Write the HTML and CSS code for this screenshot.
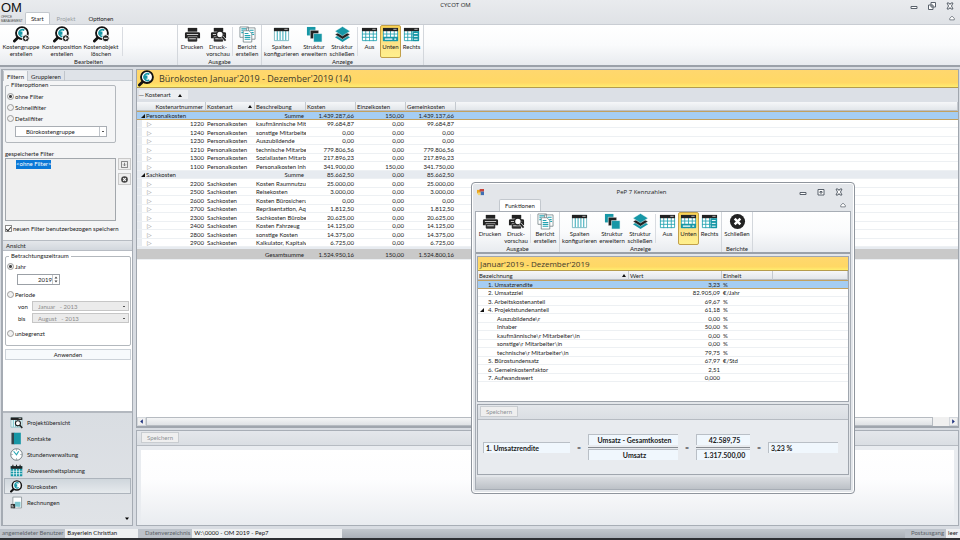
FILE: index.html
```html
<!DOCTYPE html>
<html lang="de">
<head>
    <meta charset="UTF-8">
    <meta name="viewport" content="width=device-width, initial-scale=1.0">
    <title>CYCOT OM</title>
    <link rel="stylesheet" href="styles.css">
</head>
<body>
    <!-- shared icons -->
    <svg class="sprite" aria-hidden="true">
        <symbol id="i-cost" viewBox="0 0 18 18">
            <path d="M5 12.500 1.500 16" stroke="#111" stroke-width="3" stroke-linecap="round"/>
            <circle cx="9.500" cy="7.500" r="6.300" fill="#fff" stroke="#111" stroke-width="2"/>
            <path d="M12 4.500a3.600 3.600 0 1 0 0 6M6 6.700h4M6 8.500h4" fill="none" stroke="#1797a6" stroke-width="1.700"/>
        </symbol>
        <symbol id="i-plus" viewBox="0 0 18 18">
            <use href="#i-cost"/>
            <circle cx="13.500" cy="13" r="3.700" fill="#222" stroke="#fff"/>
            <path d="M11.500 13h4M13.500 11v4" stroke="#fff" stroke-width="1.200"/>
        </symbol>
        <symbol id="i-minus" viewBox="0 0 18 18">
            <use href="#i-cost"/>
            <circle cx="13.500" cy="13" r="3.700" fill="#222" stroke="#fff"/>
            <path d="M11.500 13h4" stroke="#fff" stroke-width="1.200"/>
        </symbol>
        <symbol id="i-print" viewBox="0 0 18 18">
            <path d="M4 2h10v4H4z" fill="#222"/>
            <path d="M2.500 6.500h13a1.500 1.500 0 0 1 1.500 1.500v5h-3v-2H4v2H1V8a1.500 1.500 0 0 1 1.500-1.500z" fill="#222"/>
            <path d="M4.500 12h9v4h-9z" fill="#333" stroke="#222"/>
            <path d="M5.500 13.500h7M3 9h12" stroke="#fff" stroke-width=".8"/>
        </symbol>
        <symbol id="i-preview" viewBox="0 0 18 18">
            <use href="#i-print"/>
            <circle cx="10.500" cy="9" r="3.500" fill="#fff" stroke="#222" stroke-width="1.300"/>
            <path d="m13 11.500 3.500 4" stroke="#fff" stroke-width="3"/>
            <path d="m13 11.500 3.500 4" stroke="#222" stroke-width="1.800"/>
        </symbol>
        <symbol id="i-report" viewBox="0 0 18 18">
            <g fill="#fff" stroke="#6d7c80" stroke-width=".8">
                <path d="M1 1h9v11H1zM8 2h9v12H8z"/>
                <path d="M4.500 5h6l3 3v9h-9z"/>
            </g>
            <path d="M2.500 3h5M2.500 5h2M2.500 7h2M11 4.500h4.500M13 7h2.500M14 9h2M6 8h4M6 10h6M6 12h6M6 14h6" stroke="#25a3b1" stroke-width="1.200"/>
        </symbol>
        <symbol id="i-cols" viewBox="0 0 18 18">
            <path d="M1.500 2.500h15v13h-15z" fill="#fff" stroke="#5aa9b3" stroke-width=".8"/>
            <path d="M4.500 5v10M7.500 5v10M10.500 5v10M13.500 5v10" stroke="#25a3b1"/>
            <path d="M1 2h16v3.500H1z" fill="#222"/>
            <path d="M12 3.500h3.500" stroke="#fff" stroke-width=".7"/>
        </symbol>
        <symbol id="i-expand" viewBox="0 0 18 18">
            <path d="M1 1h9v9H1z" fill="#1797a6"/>
            <path d="M4.500 4.500h9v9h-9z" fill="#222" stroke="#fff" stroke-width=".6"/>
            <path d="M8 8h9v9H8z" fill="#1797a6" stroke="#fff" stroke-width=".6"/>
        </symbol>
        <symbol id="i-collapse" viewBox="0 0 18 18">
            <path d="m9 7.500 8 4.500-8 5-8-5z" fill="#1797a6"/>
            <path d="m9 4.500 8 4.500-8 5-8-5z" fill="#222" stroke="#fff" stroke-width=".5"/>
            <path d="m9 .5 8 5-8 5-8-5z" fill="#1797a6" stroke="#fff" stroke-width=".5"/>
        </symbol>
        <symbol id="i-grid" viewBox="0 0 18 18">
            <path d="M1 2h16v14H1z" fill="#fff"/>
            <path d="M1.500 5v10.500h15V5M1 8.500h16M1 12h16M5 5v11M9 5v11M13 5v11" fill="none" stroke="#25a3b1" stroke-width=".9"/>
            <path d="M1 2h16v3.500H1z" fill="#222"/>
            <path d="M12 3.500h3.500" stroke="#fff" stroke-width=".7"/>
        </symbol>
        <symbol id="i-bottom" viewBox="0 0 18 18">
            <use href="#i-grid"/>
            <path d="M1 11.500h16V16H1z" fill="#1797a6"/>
            <path d="M3 13.800h8M13 13.800h2" stroke="#fff" stroke-width="1.300"/>
        </symbol>
        <symbol id="i-right" viewBox="0 0 18 18">
            <use href="#i-grid"/>
            <path d="M10 5.500h7V16h-7z" fill="#1797a6"/>
            <path d="M11.500 8h4M11.500 11h4M11.500 14h4" stroke="#fff"/>
        </symbol>
        <symbol id="i-close" viewBox="0 0 18 18">
            <circle cx="9" cy="9" r="8" fill="#222"/>
            <path d="m6 6 6 6M12 6l-6 6" stroke="#fff" stroke-width="2.600"/>
        </symbol>
        <symbol id="i-project" viewBox="0 0 18 18">
            <use href="#i-cols"/>
            <circle cx="11" cy="10" r="3.500" fill="#fff" stroke="#222" stroke-width="1.500"/>
            <path d="m13.500 12.500 3.500 4" stroke="#222" stroke-width="2"/>
        </symbol>
        <symbol id="i-book" viewBox="0 0 18 18">
            <path d="M2 1h4v16H2z" fill="#35454c"/>
            <path d="M5.500 1H15v16H5.500z" fill="#1797a6"/>
        </symbol>
        <symbol id="i-clock" viewBox="0 0 18 18">
            <circle cx="9" cy="9" r="8" fill="#fff" stroke="#4b5a60"/>
            <path d="M9 2v1.500M9 14.500V16M2 9h1.500M14.500 9H16" stroke="#4b5a60"/>
            <path d="M5 4.500 9 9.500l3-5" fill="none" stroke="#25a3b1" stroke-width="1.500"/>
        </symbol>
        <symbol id="i-calendar" viewBox="0 0 18 18">
            <path d="M1 3h16v14H1z" fill="#1797a6"/>
            <path d="M1 3h16v3.500H1z" fill="#222"/>
            <path d="M4 1v4M9 1v4M14 1v4" stroke="#222" stroke-width="1.500"/>
            <path d="M1 10h16M1 13.500h16M5 7v10M9 7v10M13 7v10" stroke="#fff"/>
        </symbol>
        <symbol id="i-invoice" viewBox="0 0 18 18">
            <path d="M4 1.500h12v15H4z" fill="#fff" stroke="#7b878c"/>
            <path d="M6.500 8h8v7h-8z" fill="#7cc6cf"/>
            <path d="M1 11h6v6H1z" fill="#333"/>
            <path d="M2 13h2M2 15h3M8.500 15.500h2" stroke="#fff"/>
        </symbol>
    </svg>

    <div class="app">
        <header class="header">
            <div class="logo">
                <strong>OM</strong>
                <span>OFFICE</span>
                <span>MANAGEMENT</span>
            </div>
            <div class="header-main">
                <div class="titlebar">
                    <h1>CYCOT OM</h1>
                    <div class="win-buttons">
                        <button aria-label="Minimieren"><svg viewBox="0 0 8 8"><path d="M1 4.500h6v2H1z"/></svg></button>
                        <button aria-label="Wiederherstellen"><svg viewBox="0 0 8 8"><path d="M3 .5h4.500V5H3zM.5 3H5v4.500H.5z"/></svg></button>
                        <button aria-label="Schließen"><svg viewBox="0 0 8 8"><path d="M1 1h2l1 1.500L5 1h2L5.500 4 7 7H5L4 5.500 3 7H1l1.500-3z"/></svg></button>
                    </div>
                </div>
                <nav class="tabs">
                    <button class="tab active">Start</button>
                    <button class="tab" disabled>Projekt</button>
                    <button class="tab">Optionen</button>
                    <button class="fold" aria-label="Menüband minimieren"><svg viewBox="0 0 8 8"><path d="m1 4.500 3-3 3 3v2H1z"/></svg></button>
                </nav>
            </div>
        </header>

        <div class="ribbon">
            <section class="group group-edit">
                <div class="tools">
                    <button class="tool wide"><svg><use href="#i-plus"/></svg>Kostengruppe<br>erstellen</button>
                    <button class="tool wide"><svg><use href="#i-plus"/></svg>Kostenposition<br>erstellen</button>
                    <button class="tool wide"><svg><use href="#i-minus"/></svg>Kostenobjekt<br>löschen</button>
                    <i class="sep"></i>
                </div>
                <h2>Bearbeiten</h2>
            </section>
            <section class="group">
                <div class="tools">
                    <button class="tool"><svg><use href="#i-print"/></svg>Drucken</button>
                    <button class="tool"><svg><use href="#i-preview"/></svg>Druck-<br>vorschau</button>
                    <i class="sep"></i>
                    <button class="tool"><svg><use href="#i-report"/></svg>Bericht<br>erstellen</button>
                </div>
                <h2>Ausgabe</h2>
            </section>
            <section class="group">
                <div class="tools">
                    <button class="tool wide"><svg><use href="#i-cols"/></svg>Spalten<br>konfigurieren</button>
                    <button class="tool medium"><svg><use href="#i-expand"/></svg>Struktur<br>erweitern</button>
                    <button class="tool medium"><svg><use href="#i-collapse"/></svg>Struktur<br>schließen</button>
                    <i class="sep"></i>
                    <button class="tool narrow"><svg><use href="#i-grid"/></svg>Aus</button>
                    <button class="tool narrow active"><svg><use href="#i-bottom"/></svg>Unten</button>
                    <button class="tool narrow"><svg><use href="#i-right"/></svg>Rechts</button>
                </div>
                <h2>Anzeige</h2>
            </section>
        </div>

        <div class="workspace">
            <aside class="sidebar">
                <div class="side-tabs">
                    <button class="side-tab active">Filtern</button>
                    <button class="side-tab">Gruppieren</button>
                </div>
                <div class="filter-pane">
                    <fieldset class="filter-options">
                        <legend>Filteroptionen</legend>
                        <label><input type="radio" name="filter" checked>ohne Filter</label>
                        <label><input type="radio" name="filter">Schnellfilter</label>
                        <label><input type="radio" name="filter">Detailfilter</label>
                        <select class="select" aria-label="Detailfilter">
                            <option>Bürokostengruppe</option>
                        </select>
                    </fieldset>
                    <p class="saved-title">gespeicherte Filter</p>
                    <div class="saved">
                        <ul class="saved-list">
                            <li>&lt;ohne Filter&gt;</li>
                        </ul>
                        <div class="saved-actions">
                            <button aria-label="Filter speichern"><svg viewBox="0 0 8 8"><path d="M.5.500h7v7h-7zM4 2v3M2.500 4 4 5.500 5.500 4" fill="none" stroke="#555" stroke-width=".8"/></svg></button>
                            <button aria-label="Filter löschen"><svg viewBox="0 0 8 8"><circle cx="4" cy="4" r="3.800" fill="#444"/><path d="m2.500 2.500 3 3m0-3-3 3" stroke="#fff" stroke-width="1.200"/></svg></button>
                        </div>
                    </div>
                    <label class="check"><input type="checkbox" checked>neuen Filter benutzerbezogen speichern</label>
                </div>
                <h2 class="side-head">Ansicht</h2>
                <div class="view-pane">
                    <fieldset class="period">
                        <legend>Betrachtungszeitraum</legend>
                        <label><input type="radio" name="range" checked>Jahr</label>
                        <div class="spin">
                            <input type="text" value="2019" aria-label="Jahr">
                            <svg viewBox="0 0 6 8"><path d="m1.500 3 1.500-2 1.500 2zM1.500 5 3 7l1.500-2z" fill="#444"/></svg>
                        </div>
                        <label><input type="radio" name="range">Periode</label>
                        <div class="range-row">
                            <label for="from">von</label>
                            <select id="from" class="select" disabled><option>Januar &nbsp; - 2013</option></select>
                        </div>
                        <div class="range-row">
                            <label for="to">bis</label>
                            <select id="to" class="select" disabled><option>August &nbsp; - 2013</option></select>
                        </div>
                        <label class="unlimited"><input type="radio" name="range">unbegrenzt</label>
                    </fieldset>
                    <button class="apply">Anwenden</button>
                </div>
                <nav class="modules">
                    <a href="#"><svg><use href="#i-project"/></svg>Projektübersicht</a>
                    <a href="#"><svg><use href="#i-book"/></svg>Kontakte</a>
                    <a href="#"><svg><use href="#i-clock"/></svg>Stundenverwaltung</a>
                    <a href="#"><svg><use href="#i-calendar"/></svg>Abwesenheitsplanung</a>
                    <a href="#" class="active"><svg><use href="#i-cost"/></svg>Bürokosten</a>
                    <a href="#"><svg><use href="#i-invoice"/></svg>Rechnungen</a>
                    <button class="more" aria-label="Weitere"><svg viewBox="0 0 4 3"><path d="M0 .5h4L2 3z"/></svg></button>
                </nav>
            </aside>

            <main class="content">
                <section class="costs">
                    <h2 class="banner"><svg><use href="#i-cost"/></svg>Bürokosten Januar'2019 - Dezember'2019 (14)</h2>
                    <div class="group-bar"><button>─ Kostenart <b class="up"></b></button></div>
                    <table class="grid cost-grid">
                        <colgroup>
                            <col class="c-strip"><col class="c-arrow"><col class="c-num"><col class="c-kind"><col class="c-desc">
                            <col class="c-sum"><col class="c-sum"><col class="c-sum"><col>
                        </colgroup>
                        <thead>
                            <tr><th colspan="3" class="num">Kostenartnummer</th><th>Kostenart<b class="up"></b></th><th>Beschreibung</th><th>Kosten</th><th>Einzelkosten</th><th>Gemeinkosten</th><th></th></tr>
                        </thead>
                        <tbody>
                            <tr class="sum selected"><td colspan="4"><b class="open"></b>Personalkosten</td><td class="num">Summe</td><td class="num">1.439.287,66</td><td class="num">150,00</td><td class="num">1.439.137,66</td><td></td></tr>
                            <tr><td></td><td>▷</td><td class="num">1220</td><td>Personalkosten</td><td>kaufmännische Mita</td><td class="num">99.684,87</td><td class="num">0,00</td><td class="num">99.684,87</td><td></td></tr>
                            <tr><td></td><td>▷</td><td class="num">1240</td><td>Personalkosten</td><td>sonstige Mitarbeiter</td><td class="num">0,00</td><td class="num">0,00</td><td class="num">0,00</td><td></td></tr>
                            <tr><td></td><td>▷</td><td class="num">1230</td><td>Personalkosten</td><td>Auszubildende</td><td class="num">0,00</td><td class="num">0,00</td><td class="num">0,00</td><td></td></tr>
                            <tr><td></td><td>▷</td><td class="num">1210</td><td>Personalkosten</td><td>technische Mitarbei</td><td class="num">779.806,56</td><td class="num">0,00</td><td class="num">779.806,56</td><td></td></tr>
                            <tr><td></td><td>▷</td><td class="num">1300</td><td>Personalkosten</td><td>Soziallasten Mitarb</td><td class="num">217.896,23</td><td class="num">0,00</td><td class="num">217.896,23</td><td></td></tr>
                            <tr><td></td><td>▷</td><td class="num">1100</td><td>Personalkosten</td><td>Personalkosten Inh</td><td class="num">341.900,00</td><td class="num">150,00</td><td class="num">341.750,00</td><td></td></tr>
                            <tr class="sum"><td colspan="4"><b class="open"></b>Sachkosten</td><td class="num">Summe</td><td class="num">85.662,50</td><td class="num">0,00</td><td class="num">85.662,50</td><td></td></tr>
                            <tr><td></td><td>▷</td><td class="num">2200</td><td>Sachkosten</td><td>Kosten Raumnutzur</td><td class="num">25.000,00</td><td class="num">0,00</td><td class="num">25.000,00</td><td></td></tr>
                            <tr><td></td><td>▷</td><td class="num">2500</td><td>Sachkosten</td><td>Reisekosten</td><td class="num">3.000,00</td><td class="num">0,00</td><td class="num">3.000,00</td><td></td></tr>
                            <tr><td></td><td>▷</td><td class="num">2600</td><td>Sachkosten</td><td>Kosten Bürosicheru</td><td class="num">0,00</td><td class="num">0,00</td><td class="num">0,00</td><td></td></tr>
                            <tr><td></td><td>▷</td><td class="num">2700</td><td>Sachkosten</td><td>Repräsentation, Aq</td><td class="num">1.812,50</td><td class="num">0,00</td><td class="num">1.812,50</td><td></td></tr>
                            <tr><td></td><td>▷</td><td class="num">2300</td><td>Sachkosten</td><td>Sachkosten Bürobe</td><td class="num">20.625,00</td><td class="num">0,00</td><td class="num">20.625,00</td><td></td></tr>
                            <tr><td></td><td>▷</td><td class="num">2400</td><td>Sachkosten</td><td>Kosten Fahrzeug</td><td class="num">14.125,00</td><td class="num">0,00</td><td class="num">14.125,00</td><td></td></tr>
                            <tr><td></td><td>▷</td><td class="num">2800</td><td>Sachkosten</td><td>sonstige Kosten</td><td class="num">14.375,00</td><td class="num">0,00</td><td class="num">14.375,00</td><td></td></tr>
                            <tr><td></td><td>▷</td><td class="num">2900</td><td>Sachkosten</td><td>Kalkulator, Kapitalv</td><td class="num">6.725,00</td><td class="num">0,00</td><td class="num">6.725,00</td><td></td></tr>
                        </tbody>
                        <tfoot>
                            <tr><td colspan="5" class="num">Gesamtsumme</td><td class="num">1.524.950,16</td><td class="num">150,00</td><td class="num">1.524.800,16</td><td></td></tr>
                        </tfoot>
                    </table>
                    <div class="scrollbar">
                        <button aria-label="nach links"><svg viewBox="0 0 8 8"><path d="M5.500 1.500v5L2.500 4z"/></svg></button>
                        <div class="track"><div class="thumb"></div></div>
                        <button aria-label="nach rechts"><svg viewBox="0 0 8 8"><path d="M2.500 1.500v5l3-2.500z"/></svg></button>
                    </div>
                </section>
                <section class="detail">
                    <div class="save-bar"><button class="save" disabled>Speichern</button></div>
                    <div class="detail-body"></div>
                </section>
            </main>
        </div>

        <footer class="status">
            <span class="status-label user">angemeldeter Benutzer</span>
            <span class="status-value user-name">Bayerlein Christian</span>
            <span class="status-label dir">Datenverzeichnis</span>
            <span class="status-value path">W:\0000 - OM 2019 - Pep7</span>
            <span class="status-label outbox">Postausgang</span>
            <span class="status-value">leer</span>
        </footer>
    </div>

    <div class="dialog" role="dialog" aria-labelledby="dialog-title">
        <div class="titlebar">
            <svg class="app-icon" viewBox="0 0 8 8"><path d="M0 1h4v4H0z" fill="#e9a820"/><path d="M3 0h5v3H3z" fill="#c8463c"/><path d="M4 3h4v4H4z" fill="#3f6fb5"/><path d="M1 4h3v3H1z" fill="#f3d675"/></svg>
            <h1 id="dialog-title">PeP 7 Kennzahlen</h1>
            <div class="win-buttons">
                <button aria-label="Minimieren"><svg viewBox="0 0 8 8"><path d="M1 4.500h6v2H1z"/></svg></button>
                <button aria-label="Maximieren"><svg viewBox="0 0 8 8"><path d="M1 1.500h6v5.500H1zM3 3.500h2v1.500H3z"/></svg></button>
                <button aria-label="Schließen"><svg viewBox="0 0 8 8"><path d="M1 1h2l1 1.500L5 1h2L5.500 4 7 7H5L4 5.500 3 7H1l1.500-3z"/></svg></button>
            </div>
        </div>
        <nav class="tabs">
            <button class="tab active">Funktionen</button>
            <button class="fold" aria-label="Menüband minimieren"><svg viewBox="0 0 8 8"><path d="m1 4.500 3-3 3 3v2H1z"/></svg></button>
        </nav>
        <div class="dialog-frame">
            <div class="ribbon">
                <section class="group">
                    <div class="tools">
                        <button class="tool"><svg><use href="#i-print"/></svg>Drucken</button>
                        <button class="tool"><svg><use href="#i-preview"/></svg>Druck-<br>vorschau</button>
                        <i class="sep"></i>
                        <button class="tool"><svg><use href="#i-report"/></svg>Bericht<br>erstellen</button>
                    </div>
                    <h2>Ausgabe</h2>
                </section>
                <section class="group">
                    <div class="tools">
                        <button class="tool wide"><svg><use href="#i-cols"/></svg>Spalten<br>konfigurieren</button>
                        <button class="tool medium"><svg><use href="#i-expand"/></svg>Struktur<br>erweitern</button>
                        <button class="tool medium"><svg><use href="#i-collapse"/></svg>Struktur<br>schließen</button>
                        <i class="sep"></i>
                        <button class="tool narrow"><svg><use href="#i-grid"/></svg>Aus</button>
                        <button class="tool narrow active"><svg><use href="#i-bottom"/></svg>Unten</button>
                        <button class="tool narrow"><svg><use href="#i-right"/></svg>Rechts</button>
                    </div>
                    <h2>Anzeige</h2>
                </section>
                <section class="group">
                    <div class="tools">
                        <button class="tool medium"><svg><use href="#i-close"/></svg>Schließen</button>
                    </div>
                    <h2>Berichte</h2>
                </section>
            </div>
            <div class="kpi-panel">
                <h2 class="banner">Januar'2019 - Dezember'2019</h2>
                <table class="grid kpi-grid">
                    <colgroup><col class="k-name"><col class="k-value"><col class="k-unit"><col></colgroup>
                    <thead>
                        <tr><th>Bezeichnung<b class="up"></b></th><th>Wert</th><th>Einheit</th><th></th></tr>
                    </thead>
                    <tbody>
                        <tr class="selected"><td>1. Umsatzrendite</td><td class="num">3,23</td><td>%</td><td></td></tr>
                        <tr><td>2. Umsatzziel</td><td class="num">82.905,09</td><td>€/Jahr</td><td></td></tr>
                        <tr><td>3. Arbeitskostenanteil</td><td class="num">69,67</td><td>%</td><td></td></tr>
                        <tr><td class="parent"><b class="open"></b>4. Projektstundenanteil</td><td class="num">61,18</td><td>%</td><td></td></tr>
                        <tr><td class="child">Auszubildende\r</td><td class="num">0,00</td><td>%</td><td></td></tr>
                        <tr><td class="child">Inhaber</td><td class="num">50,00</td><td>%</td><td></td></tr>
                        <tr><td class="child">kaufmännische\r Mitarbeiter\in</td><td class="num">0,00</td><td>%</td><td></td></tr>
                        <tr><td class="child">sonstige\r Mitarbeiter\in</td><td class="num">0,00</td><td>%</td><td></td></tr>
                        <tr><td class="child">technische\r Mitarbeiter\in</td><td class="num">79,75</td><td>%</td><td></td></tr>
                        <tr><td>5. Bürostundensatz</td><td class="num">67,97</td><td>€/Std</td><td></td></tr>
                        <tr><td>6. Gemeinkostenfaktor</td><td class="num">2,51</td><td></td><td></td></tr>
                        <tr><td>7. Aufwandswert</td><td class="num">0,000</td><td></td><td></td></tr>
                    </tbody>
                </table>
            </div>
            <div class="formula-panel">
                <div class="save-bar"><button class="save" disabled>Speichern</button></div>
                <div class="formula">
                    <output class="term name">1. Umsatzrendite</output>
                    <span>=</span>
                    <div class="fraction text">
                        <output class="term">Umsatz - Gesamtkosten</output>
                        <output class="term">Umsatz</output>
                    </div>
                    <span>=</span>
                    <div class="fraction">
                        <output class="term">42.589,75</output>
                        <output class="term">1.317.500,00</output>
                    </div>
                    <span>=</span>
                    <output class="term result">3,23 %</output>
                </div>
            </div>
            <div class="dialog-status"></div>
        </div>
    </div>
</body>
</html>
```
FILE: styles.css
```css
* {
    box-sizing: border-box;
}

body {
    margin: 0;
    font-family: Lato, "Liberation Sans", sans-serif;
    font-size: 6px;
    line-height: 7px;
    color: #222;
    background: #dfe3e8;
    overflow: hidden;
}

h1, h2, p, ul {
    margin: 0;
    padding: 0;
    font-size: 6px;
    font-weight: normal;
    list-style: none;
}

button, input, select {
    font: inherit;
    color: inherit;
    margin: 0;
    padding: 0;
    border: 0;
    background: none;
}

.sprite {
    display: none;
}

.app {
    display: flex;
    flex-direction: column;
    height: 100vh;
    border-bottom: 2px solid #2d2f33;
}

/* header */
.header {
    display: flex;
    height: 24px;
    background: linear-gradient(#e9ebee, #dfe2e6);
}

.logo {
    width: 25px;
    padding-left: 1px;
    font-family: "Liberation Sans", sans-serif;
    font-size: 3px;
    line-height: 4px;
    color: #444;
}

.logo strong {
    display: block;
    font-size: 13px;
    font-weight: normal;
    line-height: 15px;
    color: #111;
}

.logo span {
    display: block;
}

.header-main {
    flex: 1;
    display: flex;
    flex-direction: column;
    justify-content: space-between;
}

.titlebar {
    display: flex;
    align-items: center;
    height: 11px;
    padding-right: 6px;
}

.titlebar h1 {
    flex: 1;
    text-align: center;
    font-family: "Open Sans", sans-serif;
}

.header .titlebar h1 {
    padding-right: 24px;
}

.win-buttons {
    display: flex;
    gap: 10px;
}

.win-buttons button, .fold {
    width: 8px;
    height: 8px;
}

.win-buttons svg, .fold svg {
    display: block;
    fill: #fff;
    stroke: #59616b;
    stroke-width: 1;
}

.tabs {
    display: flex;
    align-items: flex-end;
    padding-right: 3px;
}

.tab {
    height: 12px;
    padding: 0 5px;
    margin-right: 1px;
    border: 1px solid transparent;
    border-bottom: 0;
}

.tab:disabled {
    color: #9a9fa5;
}

.tab.active {
    background: #fff;
    border-color: #c3c8ce;
    border-radius: 2px 2px 0 0;
}

.fold {
    margin-left: auto;
    align-self: center;
}

.fold svg {
    width: 6px;
    height: 6px;
}

/* ribbon */
.ribbon {
    display: flex;
    height: 43px;
    background: linear-gradient(#fff, #fafbfc 50%, #e8ebef);
    border-top: 1px solid #c9cdd3;
    border-bottom: 2px solid #9ba1a9;
}

.group {
    display: flex;
    flex-direction: column;
    justify-content: space-between;
    border-right: 1px solid #d3d7dc;
}

.group-edit {
    width: 178px;
}

.group h2 {
    text-align: center;
    line-height: 7px;
}

.tools {
    display: flex;
    padding: 0 1px;
}

.tool {
    display: grid;
    justify-items: center;
    align-content: start;
    width: 26px;
    height: 33px;
    white-space: nowrap;
    border: 1px solid transparent;
    border-radius: 2px;
}

.tool svg {
    width: 17px;
    height: 17px;
}

.tool.wide {
    width: 37px;
}

.tool.medium {
    width: 28px;
}

.tool.narrow {
    width: 21px;
}

.group-edit .tool.wide {
    width: 40px;
}

.tool.active {
    background: linear-gradient(#fbd24f, #fde48a 60%, #fff08c);
    border-color: #c2a04a;
}

.sep {
    width: 1px;
    margin: 2px 1px;
    background: #d9dce1;
}

/* workspace */
.workspace {
    flex: 1;
    display: flex;
    gap: 3px;
    min-height: 0;
    padding: 2px 1px 3px;
    background: #d8dce2;
}

.sidebar {
    display: flex;
    flex-direction: column;
    width: 132px;
    border: 1px solid #a5abb3;
    border-left-width: 2px;
    background: #f4f5f6;
}

.side-tabs {
    display: flex;
    height: 11px;
    padding-top: 1px;
    background: #dfe3e8;
    border-bottom: 1px solid #c6cbd1;
}

.side-tab {
    height: 10px;
    padding: 0 3px;
    border-right: 1px solid #c0c5cb;
}

.side-tab.active {
    background: #f4f5f6;
    border-left: 1px solid #c0c5cb;
}

.filter-pane {
    height: 159px;
    padding: 0 1px 0 2px;
}

fieldset {
    min-width: 0;
    margin: 0;
    padding: 0 1px;
    border: 1px solid #b3b8bd;
    border-radius: 2px;
}

legend {
    margin-left: 2px;
    padding: 0 2px;
    line-height: 8px;
}

fieldset label, .check {
    display: flex;
    align-items: center;
    gap: 1px;
}

.filter-options {
    width: 111px;
    height: 62px;
}

.filter-options label {
    height: 11px;
}

.filter-options legend + label {
    margin-top: 2px;
}

input[type="radio"] {
    appearance: none;
    width: 7px;
    height: 7px;
    border: 1px solid #9a9a9a;
    border-radius: 50%;
    background: #f1f1f1;
}

input[type="radio"]:checked {
    background: radial-gradient(#444 0 1px, #f1f1f1 2px);
}

.select {
    appearance: none;
    height: 11px;
    padding: 0 10px;
    border: 1px solid #a9aeb4;
    background: #fff linear-gradient(#555, #555) no-repeat right 3px center / 2px 1px;
}

.select:disabled {
    color: #8c8c8c;
    background-color: #ebebeb;
    border-color: #c6c6c6;
    opacity: 1;
}

.filter-options .select {
    display: block;
    width: 92px;
    margin: 2px 0 0 8px;
    background:
        linear-gradient(#555, #555) no-repeat right 2px center / 2px 1px,
        linear-gradient(#c0c5cb, #c0c5cb) no-repeat right 6px center / 1px 100%,
        #fff;
}

.saved-title {
    margin-top: 7px;
}

.saved {
    display: flex;
    justify-content: space-between;
    margin-top: 1px;
}

.saved-list {
    width: 111px;
    height: 63px;
    padding: 1px 0 0 10px;
    border: 1px solid #a2a7ac;
    background: #efefef;
}

.saved-list li {
    width: 35px;
    height: 9px;
    line-height: 8px;
    white-space: nowrap;
    text-align: center;
    color: #fff;
    background: #0a78d7;
}

.saved-actions {
    display: flex;
    flex-direction: column;
    gap: 3px;
}

.saved-actions button {
    display: grid;
    place-items: center;
    width: 13px;
    height: 12px;
    border: 1px solid #c9c9c9;
    background: #eee;
}

.saved-actions svg {
    width: 7px;
    height: 7px;
}

.check {
    margin-top: 4px;
}

.check input {
    appearance: none;
    display: grid;
    place-items: center;
    width: 7px;
    height: 7px;
    border: 1px solid #8c8c8c;
    background: #fff;
}

.check input:checked::before {
    content: "";
    width: 2px;
    height: 4px;
    border: solid #333;
    border-width: 0 1px 1px 0;
    transform: rotate(40deg);
}

.side-head {
    height: 11px;
    padding-left: 3px;
    line-height: 10px;
    background: linear-gradient(#e4e7eb, #d2d7dd);
    border: 1px solid #b7bcc3;
    border-width: 1px 0;
}

.view-pane {
    flex: 1;
    padding: 1px 1px 0 2px;
    background: #fff;
}

.period {
    height: 94px;
}

.period legend {
    margin-bottom: 1px;
}

.period > label {
    height: 10px;
}

.spin {
    display: flex;
    width: 43px;
    height: 11px;
    margin: 3px 0 4px 10px;
    border: 1px solid #9ba0a6;
    background: #fff;
}

.spin input {
    flex: 1;
    min-width: 0;
    text-align: right;
}

.spin svg {
    width: 7px;
    border-left: 1px solid #c6c6c6;
}

.range-row {
    display: flex;
    align-items: center;
    margin: 2px 0 1px 11px;
}

.range-row label {
    width: 14px;
}

.range-row .select {
    flex: 1;
    height: 10px;
    padding: 0 5px;
}

.period .unlimited {
    margin-top: 5px;
}

.apply {
    display: block;
    width: 100%;
    height: 11px;
    margin-top: 3px;
    border: 1px solid #ccd2d8;
    background: #f7fafc;
}

.modules {
    height: 114px;
    padding: 1px 1px 0;
    background: linear-gradient(#d9dde2, #e0e3e7);
    border-top: 2px solid #b3b8bf;
}

.modules a {
    display: flex;
    align-items: center;
    gap: 4px;
    height: 16px;
    padding-left: 5px;
    border: 1px solid transparent;
    color: inherit;
    text-decoration: none;
}

.modules a.active {
    border-color: #adb4bc;
    background: linear-gradient(#cfd6dc, #e6eaed);
}

.modules svg {
    width: 13px;
    height: 13px;
}

.more {
    display: block;
    margin: 7px 2px 0 auto;
}

.modules .more svg {
    display: block;
    width: 4px;
    height: 3px;
}

/* content */
.content {
    flex: 1;
    display: flex;
    flex-direction: column;
    gap: 2px;
    min-width: 0;
}

.costs {
    flex: 1;
    display: flex;
    flex-direction: column;
    border: 1px solid #a0a6ae;
    border-bottom-width: 2px;
    background: #fff;
}

.banner {
    display: flex;
    align-items: center;
    gap: 4px;
    height: 18px;
    padding-left: 1px;
    font-family: "Open Sans", "Noto Sans", sans-serif;
    font-size: 9px;
    color: #3c3a2c;
    background: linear-gradient(#ffd76e, #ffd865 75%, #ffee70);
    border-bottom: 1px solid #b59c4c;
}

.banner svg {
    width: 17px;
    height: 17px;
}

.group-bar {
    height: 14px;
    padding: 2px;
    background: #dce0e6;
}

.group-bar button {
    display: block;
    width: 49px;
    height: 9px;
    text-align: left;
    background: #eceef1;
}

.up {
    display: inline-block;
    margin-left: 6px;
    border: 2px solid transparent;
    border-top: 0;
    border-bottom: 3px solid #111;
}

.open {
    display: inline-block;
    margin-right: 1px;
    border-left: 4px solid transparent;
    border-bottom: 4px solid #111;
}

.cost-grid .open {
    margin-left: 3px;
}

.grid {
    width: 100%;
    table-layout: fixed;
    border-collapse: separate;
    border-spacing: 0;
    background: #fff;
}

.grid th, .grid td {
    height: 9px;
    padding: 0 2px 0 1px;
    line-height: 7px;
    text-align: left;
    font-weight: normal;
    white-space: nowrap;
    overflow: hidden;
    border-bottom: 1px solid #edf0f3;
}

.grid tbody tr:nth-child(even) td {
    height: 8px;
}

.grid th {
    background: linear-gradient(#f6f7f9, #e2e6ea);
    border-right: 1px solid #c4c9cf;
    border-bottom-color: #b9bec5;
}

.grid th .up {
    float: right;
    margin: 2px 0 0;
}

.grid .num {
    text-align: right;
}

.grid .selected td {
    background: #a5cdf3;
    border: 0 solid #c3a15f;
    border-width: 1px 0;
}

.cost-grid .sum:not(.selected) td, .cost-grid td:first-child {
    background-color: #e7ebf0;
}

.cost-grid .selected td:first-child {
    background: #a5cdf3;
}

.cost-grid tr:not(.sum) td:nth-child(2):not(.num) {
    padding-left: 5px;
    color: #888;
}

.cost-grid td:nth-child(5):not(.num) {
    padding-right: 0;
}

.grid tfoot td {
    height: 13px;
    background: #c9c9c9;
    border-top: 2px solid #e7ebf0;
}

.cost-grid tfoot td:first-child {
    background: #c9c9c9;
}

.c-strip { width: 5px; }
.c-arrow { width: 14px; }
.c-num { width: 50px; }
.c-kind { width: 49px; }
.c-desc { width: 51px; }
.c-sum { width: 50px; }

.scrollbar {
    display: flex;
    height: 9px;
    margin-top: auto;
    background: #f0f0f0;
}

.scrollbar button {
    width: 9px;
    border: 1px solid #d3d7dc;
}

.scrollbar svg {
    display: block;
    fill: #1b2f7c;
}

.track {
    flex: 1;
}

.thumb {
    width: 98%;
    height: 9px;
    border: 1px solid #b6bbc1;
    background: linear-gradient(#f4f5f6, #dfe2e5);
}

.detail {
    display: flex;
    flex-direction: column;
    height: 96px;
    border: 1px solid #a8aeb6;
    background: #e9ecf0;
}

.save-bar {
    height: 15px;
    padding: 1px 4px;
    background: linear-gradient(#e4e7eb, #dadee3);
    border-bottom: 1px solid #b6bbc2;
}

.save {
    width: 38px;
    height: 11px;
    color: #8d9196;
    border: 1px solid #c9cdd1;
    background: #efefef;
}

.detail-body {
    flex: 1;
    margin: 4px 4px 0;
    background: linear-gradient(#fff, #fdfdfe 40%, #e9ecf0);
}

/* status bar */
.status {
    display: flex;
    height: 9px;
    line-height: 8px;
    background: linear-gradient(#c2c7cd, #aab0b8);
}

.status span {
    padding: 0 2px;
    white-space: nowrap;
}

.status-label {
    color: #5b6168;
    background: #bcc2ca;
}

.status-value {
    color: #111;
    background: #eef0f2;
}

.user { min-width: 60px; }
.user-name { width: 73px; }
.dir { width: 54px; text-align: right; }
.path { width: 150px; }
.outbox { margin-left: auto; width: 41px; text-align: right; }

/* dialog window above the workspace */
.dialog {
    position: absolute;
    left: 471px;
    top: 182px;
    width: 384px;
    padding: 2px 3px 3px;
    border: 1px solid #8f959d;
    border-radius: 4px;
    background: #e3e6ea;
    box-shadow: inset 0 0 0 1px #fff;
}

.dialog .titlebar {
    height: 14px;
    padding: 0 8px 0 2px;
}

.app-icon {
    width: 7px;
    height: 7px;
}

.dialog .tabs {
    padding: 0 3px 0 24px;
}

.dialog-frame {
    border: 1px solid #a7adb5;
}

.dialog .ribbon {
    height: 42px;
    border-top: 0;
}

.kpi-panel, .formula-panel {
    margin: 2px 1px 0;
    border: 1px solid #a0a6ae;
}

.kpi-panel {
    height: 146px;
    background: #fff;
}

.dialog .banner {
    height: 14px;
    padding-left: 2px;
    font-size: 8px;
}

.kpi-grid td:first-child {
    padding-left: 10px;
}

.kpi-grid td.parent {
    padding-left: 2px;
}

.kpi-grid .parent .open {
    margin-right: 4px;
}

.kpi-grid td.child {
    padding-left: 19px;
}

.k-name { width: 151px; }
.k-value { width: 93px; }
.k-unit { width: 51px; }

.formula-panel {
    background: #e8ebef;
}

.formula-panel .save-bar {
    padding: 1px 2px;
}

.formula {
    display: flex;
    align-items: center;
    justify-content: space-between;
    height: 54px;
    padding: 0 10px 0 5px;
    font-size: 7px;
    font-weight: bold;
}

.term {
    display: block;
    height: 11px;
    padding-left: 2px;
    line-height: 10px;
    border: 1px solid #b9bfc6;
    border-width: 1px 0 0 1px;
    background: #f0f7fd;
}

.term.name { width: 87px; }
.term.result { width: 70px; }

.fraction {
    display: flex;
    flex-direction: column;
    gap: 4px;
    width: 54px;
    text-align: center;
    background: linear-gradient(#868b91, #868b91) no-repeat center / 100% 1px;
}

.fraction.text {
    width: 90px;
}

.dialog-status {
    height: 12px;
    margin-top: 2px;
    background: linear-gradient(#dadde1, #bcc1c7);
}
```
